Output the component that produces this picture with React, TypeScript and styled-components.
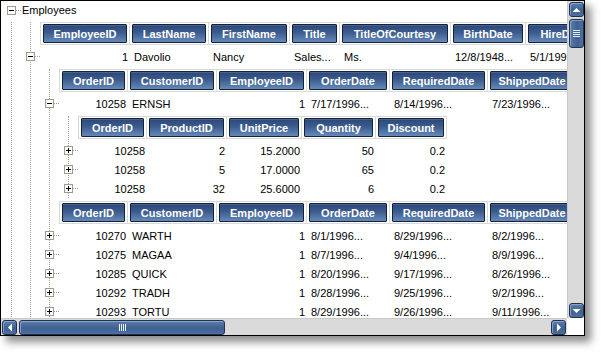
import React from 'react';
import styled, { createGlobalStyle } from 'styled-components';

type Col = { title: string; width: number; right?: boolean };

const employeeCols: Col[] = [
  { title: 'EmployeeID', width: 84, right: true },
  { title: 'LastName', width: 74 },
  { title: 'FirstName', width: 76 },
  { title: 'Title', width: 45 },
  { title: 'TitleOfCourtesy', width: 106 },
  { title: 'BirthDate', width: 70 },
  { title: 'HireDate', width: 70 },
  { title: 'Address', width: 90 },
];

const orderCols: Col[] = [
  { title: 'OrderID', width: 63, right: true },
  { title: 'CustomerID', width: 84 },
  { title: 'EmployeeID', width: 85, right: true },
  { title: 'OrderDate', width: 78 },
  { title: 'RequiredDate', width: 93 },
  { title: 'ShippedDate', width: 84 },
];

const detailCols: Col[] = [
  { title: 'OrderID', width: 63, right: true },
  { title: 'ProductID', width: 75, right: true },
  { title: 'UnitPrice', width: 70, right: true },
  { title: 'Quantity', width: 69, right: true },
  { title: 'Discount', width: 66, right: true },
];

const employee = ['1', 'Davolio', 'Nancy', 'Sales...', 'Ms.', '12/8/1948...', '5/1/1992...', '507 - 20th Ave. E.'];

const firstOrder = ['10258', 'ERNSH', '1', '7/17/1996...', '8/14/1996...', '7/23/1996...'];

const details = [
  ['10258', '2', '15.2000', '50', '0.2'],
  ['10258', '5', '17.0000', '65', '0.2'],
  ['10258', '32', '25.6000', '6', '0.2'],
];

const orders = [
  ['10270', 'WARTH', '1', '8/1/1996...', '8/29/1996...', '8/2/1996...'],
  ['10275', 'MAGAA', '1', '8/7/1996...', '9/4/1996...', '8/9/1996...'],
  ['10285', 'QUICK', '1', '8/20/1996...', '9/17/1996...', '8/26/1996...'],
  ['10292', 'TRADH', '1', '8/28/1996...', '9/25/1996...', '9/2/1996...'],
  ['10293', 'TORTU', '1', '8/29/1996...', '9/26/1996...', '9/11/1996...'],
];

const GlobalStyle = createGlobalStyle`
  html, body {
    margin: 0;
    padding: 0;
    background: #ffffff;
  }
  body {
    font-family: "Liberation Sans", Arial, sans-serif;
    font-size: 11px;
    color: #000;
  }
`;

const Page = styled.div`
  width: 601px;
  height: 352px;
  overflow: hidden;
`;

const Frame = styled.div`
  display: grid;
  grid-template-columns: 566px 17px;
  grid-template-rows: 317px 17px;
  width: 583px;
  border: 1px solid #000;
  background: #fff;
  box-shadow: 6px 6px 8px rgba(0, 0, 0, 0.45);
`;

const Viewport = styled.div`
  overflow: hidden;
  background: #fff;
`;

const RootRow = styled.div`
  display: flex;
  align-items: center;
  height: 18px;
  padding-left: 6px;
`;

const RootLabel = styled.span`
  margin-left: 1px;
  font-size: 11px;
  white-space: nowrap;
`;

const Level = styled.div<{ $indent: number }>`
  margin-left: ${(p) => p.$indent}px;
  border-left: 1px dotted #a19f92;
`;

const Expander = styled.div<{ $overlap?: boolean }>`
  flex: none;
  position: relative;
  width: 9px;
  height: 9px;
  box-sizing: border-box;
  border: 1px solid #9d9b8e;
  background: #fff;
  display: flex;
  align-items: center;
  justify-content: center;
  margin-left: ${(p) => (p.$overlap ? '-5px' : '0')};
`;

const Sign = styled.svg`
  display: block;
`;

const Connector = styled.span`
  flex: none;
  width: 5px;
  border-top: 1px dotted #a19f92;
`;

const HeaderRow = styled.div`
  display: flex;
  width: max-content;
  margin: 3px 0 2px 9px;
  border-top: 1px solid #d9d9d9;
  border-bottom: 1px solid #d9d9d9;
  border-right: 1px solid #d9d9d9;
`;

const HeaderCell = styled.div`
  flex: none;
  padding: 1px 2px;
  border-left: 1px solid #d9d9d9;
`;

const HeaderButton = styled.div<{ $w: number }>`
  width: ${(p) => p.$w}px;
  height: 19px;
  box-sizing: border-box;
  border: 1px solid #14223b;
  border-radius: 1px;
  background: linear-gradient(#2c4776 0%, #3c5c8e 45%, #6589b8 100%);
  box-shadow: inset 0 1px 0 rgba(120, 150, 200, 0.35);
  color: #fff;
  font-weight: bold;
  font-size: 11px;
  display: flex;
  align-items: center;
  justify-content: center;
  white-space: nowrap;
  overflow: hidden;
`;

const DataRow = styled.div`
  display: flex;
  align-items: center;
  height: 19px;
  width: max-content;
`;

const DataCell = styled.div<{ $w: number; $right?: boolean }>`
  flex: none;
  box-sizing: border-box;
  width: ${(p) => p.$w + 5}px;
  padding: 0 1px 0 5px;
  text-align: ${(p) => (p.$right ? 'right' : 'left')};
  white-space: nowrap;
  overflow: hidden;
`;

const VScroll = styled.div`
  display: flex;
  flex-direction: column;
  padding: 1px 1px 0 1px;
  background: #dadada;
  border-left: 1px solid #c8c8c8;
  box-sizing: border-box;
`;

const HScroll = styled.div`
  display: flex;
  align-items: center;
  padding: 1px 1px 0 1px;
  background: #dadada;
  border-top: 1px solid #c8c8c8;
  box-sizing: border-box;
`;

const Corner = styled.div`
  background: #fff;
`;

const ScrollButton = styled.div`
  flex: none;
  width: 15px;
  height: 15px;
  box-sizing: border-box;
  border: 1px solid #1f3050;
  border-radius: 3px;
  background: linear-gradient(#5a7eab, #3f6090 55%, #4d70a0);
  box-shadow: inset 1px 1px 0 rgba(170, 195, 230, 0.6);
  display: flex;
  align-items: center;
  justify-content: center;
`;

const Thumb = styled.div<{ $horizontal?: boolean }>`
  flex: none;
  box-sizing: border-box;
  width: ${(p) => (p.$horizontal ? '206px' : '15px')};
  height: ${(p) => (p.$horizontal ? '15px' : '29px')};
  margin: ${(p) => (p.$horizontal ? '0 0 0 2px' : '2px 0 0 0')};
  border: 1px solid #1f3050;
  border-radius: 3px;
  background: ${(p) =>
    p.$horizontal
      ? 'linear-gradient(#5a7eab, #3f6090 55%, #4d70a0)'
      : 'linear-gradient(90deg, #5a7eab, #3f6090 55%, #4d70a0)'};
  box-shadow: inset 1px 1px 0 rgba(170, 195, 230, 0.6);
  display: flex;
  align-items: center;
  justify-content: center;
`;

const Spacer = styled.div`
  flex: 1;
`;

const Toggle: React.FC<{ open?: boolean; overlap?: boolean }> = ({ open, overlap }) => (
  <Expander $overlap={overlap}>
    <Sign width="7" height="7" viewBox="0 0 7 7">
      <rect x="1" y="3" width="5" height="1" fill="#000" />
      {!open && <rect x="3" y="1" width="1" height="5" fill="#000" />}
    </Sign>
  </Expander>
);

const BandHeader: React.FC<{ cols: Col[] }> = ({ cols }) => (
  <HeaderRow>
    {cols.map((c) => (
      <HeaderCell key={c.title}>
        <HeaderButton $w={c.width}>{c.title}</HeaderButton>
      </HeaderCell>
    ))}
  </HeaderRow>
);

const Record: React.FC<{ cols: Col[]; values: string[]; open?: boolean }> = ({ cols, values, open }) => (
  <DataRow>
    <Toggle open={open} overlap />
    <Connector />
    {cols.map((c, i) => (
      <DataCell key={c.title} $w={c.width} $right={c.right}>
        {values[i]}
      </DataCell>
    ))}
  </DataRow>
);

const Arrow: React.FC<{ dir: 'up' | 'down' | 'left' | 'right' }> = ({ dir }) => {
  const pts = {
    up: '0.5,5 4.5,1 8.5,5',
    down: '0.5,1 4.5,5 8.5,1',
    left: '5,0.5 1,4.5 5,8.5',
    right: '1,0.5 5,4.5 1,8.5',
  }[dir];
  const vertical = dir === 'up' || dir === 'down';
  return (
    <svg width={vertical ? 9 : 6} height={vertical ? 6 : 9} viewBox={vertical ? '0 0 9 6' : '0 0 6 9'}>
      <polygon points={pts} fill="#fff" />
    </svg>
  );
};

const Grip: React.FC<{ horizontal?: boolean }> = ({ horizontal }) =>
  horizontal ? (
    <svg width="7" height="7" viewBox="0 0 7 7">
      {[0, 2, 4, 6].map((x) => (
        <rect key={x} x={x} y="0" width="1" height="7" fill="#e8eef7" />
      ))}
    </svg>
  ) : (
    <svg width="7" height="7" viewBox="0 0 7 7">
      {[0, 2, 4, 6].map((y) => (
        <rect key={y} x="0" y={y} width="7" height="1" fill="#e8eef7" />
      ))}
    </svg>
  );

const App: React.FC = () => (
  <Page>
    <GlobalStyle />
    <Frame>
      <Viewport>
        <RootRow>
          <Toggle open />
          <Connector />
          <RootLabel>Employees</RootLabel>
        </RootRow>
        <Level $indent={10}>
          <Level $indent={18}>
            <BandHeader cols={employeeCols} />
            <Record cols={employeeCols} values={employee} open />
            <Level $indent={18}>
              <BandHeader cols={orderCols} />
              <Record cols={orderCols} values={firstOrder} open />
              <Level $indent={18}>
                <BandHeader cols={detailCols} />
                {details.map((d, i) => (
                  <Record key={i} cols={detailCols} values={d} />
                ))}
              </Level>
              <BandHeader cols={orderCols} />
              {orders.map((o) => (
                <Record key={o[0]} cols={orderCols} values={o} />
              ))}
            </Level>
          </Level>
        </Level>
      </Viewport>
      <VScroll>
        <ScrollButton>
          <Arrow dir="up" />
        </ScrollButton>
        <Thumb>
          <Grip />
        </Thumb>
        <Spacer />
        <ScrollButton>
          <Arrow dir="down" />
        </ScrollButton>
      </VScroll>
      <HScroll>
        <ScrollButton>
          <Arrow dir="left" />
        </ScrollButton>
        <Thumb $horizontal>
          <Grip horizontal />
        </Thumb>
        <Spacer />
        <ScrollButton>
          <Arrow dir="right" />
        </ScrollButton>
      </HScroll>
      <Corner />
    </Frame>
  </Page>
);

export default App;
